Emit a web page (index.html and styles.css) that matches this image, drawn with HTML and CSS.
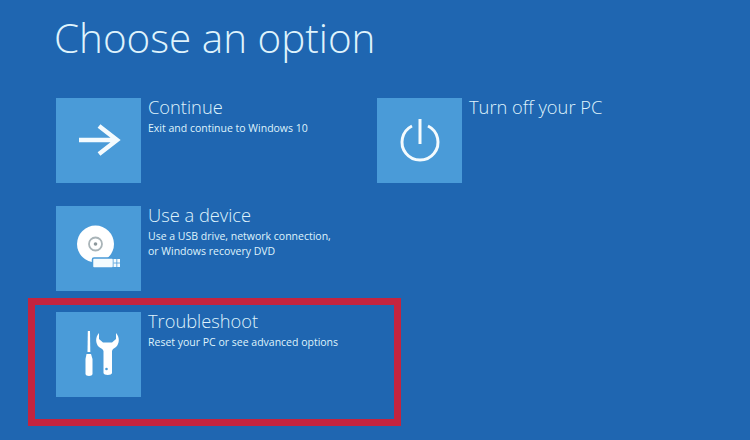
FILE: index.html
```html
<!DOCTYPE html>
<html lang="en">
<head>
    <meta charset="UTF-8">
    <title>Choose an option</title>
    <link rel="stylesheet" href="styles.css">
</head>
<body>
    <h1 class="title">Choose an option</h1>

    <div class="columns">
        <div class="column-left">
            <div class="option option-first">
                <div class="tile">
                    <svg width="84" height="84" viewBox="0 0 84 84">
                        <path d="M22 41H59M42 27L60 41L42 55" class="line" stroke-width="4.500"/>
                    </svg>
                </div>
                <div class="option-text">
                    <h2>Continue</h2>
                    <p>Exit and continue to Windows 10</p>
                </div>
            </div>

            <div class="option">
                <div class="tile">
                    <svg width="84" height="84" viewBox="0 0 84 84">
                        <circle cx="38.500" cy="37" r="18.500" fill="#fff"/>
                        <circle cx="38.500" cy="37" r="6.500" fill="none" stroke="#a9b4b8" stroke-width="1.800"/>
                        <circle cx="38.500" cy="37" r="1.800" fill="#8d989c"/>
                        <rect x="35.500" y="51" width="21" height="10" rx="1.500" fill="#f4fbfe" stroke="#4a9bd8" stroke-width="1.500"/>
                        <rect x="56.500" y="52" width="6.500" height="8" fill="#f4fbfe"/>
                        <path d="M59.800 52V60M56.500 56H63" stroke="#4a9bd8" stroke-width="0.800"/>
                    </svg>
                </div>
                <div class="option-text">
                    <h2>Use a device</h2>
                    <p>Use a USB drive, network connection,<br>or Windows recovery DVD</p>
                </div>
            </div>

            <div class="highlight">
                <div class="option">
                    <div class="tile">
                        <svg width="84" height="84" viewBox="0 0 84 84">
                            <path d="M30.800 18H33L33.300 39H30.500Z" fill="#fff"/>
                            <path d="M29.500 41H34L35.500 46V61C35.500 63.500 28.500 63.500 28.500 61V46Z" fill="#fff"/>
                            <path d="M42 20C38 24 38.500 31 42 34C44 35.500 46 36 46.500 38V60C46.500 62.500 55 62.500 55 60V38C55.500 36 57 35.500 59 34C62.500 31 63 24 59 20V26L55 29.500H46L42 26Z" fill="#fff"/>
                            <circle cx="49.500" cy="56" r="1.300" fill="#4a9bd8"/>
                        </svg>
                    </div>
                    <div class="option-text">
                        <h2>Troubleshoot</h2>
                        <p>Reset your PC or see advanced options</p>
                    </div>
                </div>
            </div>
        </div>

        <div class="column-right">
            <div class="option">
                <div class="tile">
                    <svg width="84" height="84" viewBox="0 0 84 84">
                        <path d="M42 20V45" class="line" stroke-width="3"/>
                        <path d="M34 27A18 18 0 1 0 50 27" class="line" stroke-width="3"/>
                    </svg>
                </div>
                <div class="option-text">
                    <h2>Turn off your PC</h2>
                </div>
            </div>
        </div>
    </div>
</body>
</html>
```

FILE: styles.css
```css
* {
    margin: 0;
    padding: 0;
    box-sizing: border-box;
}

html, body {
    height: 100%;
    overflow: hidden;
}

body {
    background-color: #1f66b1;
    color: #dff3fc;
    font-family: "Open Sans", "Liberation Sans", sans-serif;
}

.title {
    font-size: 40.400px;
    font-weight: 300;
    line-height: 56px;
    padding: 10px 0 0 54px;
    height: 98px;
}

.columns {
    display: flex;
    padding-left: 56px;
}

.column-left {
    width: 321px;
}

.option {
    display: flex;
    height: 85px;
    margin-bottom: 22px;
}

.option-first {
    margin-bottom: 23px;
}

.tile {
    width: 85px;
    height: 85px;
    flex-shrink: 0;
    background-color: #4a9bd8;
    display: flex;
    align-items: center;
    justify-content: center;
}

.line {
    fill: none;
    stroke: #f4fbfe;
    stroke-linecap: butt;
}

.option-text {
    padding-left: 7px;
}

.option-text h2 {
    font-size: 18.300px;
    font-weight: 300;
    line-height: 18px;
    margin-bottom: 5px;
}

.option-text p {
    font-size: 10.500px;
    line-height: 15px;
}

.highlight {
    width: 373px;
    height: 128px;
    margin: -15px 0 0 -28px;
    padding: 7px 0 0 21px;
    border: 7px solid #c4243f;
}
```
